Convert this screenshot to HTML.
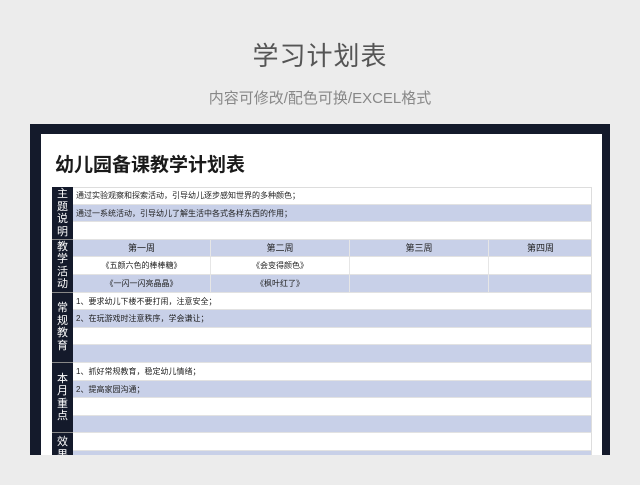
<!DOCTYPE html>
<html><head><meta charset="utf-8"><style>
*{margin:0;padding:0;box-sizing:border-box}
body{width:640px;height:485px;background:#ececec;font-family:"Liberation Sans","Noto Sans CJK SC",sans-serif;position:relative;overflow:hidden}
.t1{position:absolute;top:36px;width:640px;text-align:center;font-size:26px;color:#555;letter-spacing:1px}
.t2{position:absolute;top:87px;width:640px;text-align:center;font-size:15px;color:#888}
.panel{position:absolute;left:30px;top:124px;width:580px;height:331px;background:#141a2b}
.inner{position:absolute;left:41px;top:134px;width:561px;height:321px;background:#fff;overflow:hidden}
.h{position:absolute;left:14px;top:16px;font-size:19px;font-weight:bold;color:#1a1a1a}
.r{position:absolute;left:32px;width:519px;height:17.6px;border-bottom:1px solid #e2e2e2;border-right:1px solid #ddd;font-size:8px;color:#222;line-height:17px;padding-left:3px;white-space:nowrap}
.b{background:#c8d0e8}
.l{position:absolute;left:11px;width:21px;background:#141a2b;color:#fff;font-size:11px;text-align:center;line-height:12.5px;display:flex;flex-direction:column;justify-content:center;border-bottom:1px solid #888}
.c{position:absolute;top:0;height:100%;text-align:center;border-right:1px solid #e6e6e6}
.top{position:absolute;left:32px;top:53px;width:519px;border-top:1px solid #ddd}
</style></head><body>
<div class="t1">学习计划表</div>
<div class="t2">内容可修改/配色可换/EXCEL格式</div>
<div class="panel"></div>
<div class="inner">
<div class="h">幼儿园备课教学计划表</div>
<div class="top"></div>
<div class="l" style="top:53px;height:53px">主<br>题<br>说<br>明</div>
<div class="r" style="top:53px">通过实验观察和探索活动，引导幼儿逐步感知世界的多种颜色；</div>
<div class="r b" style="top:70.6px">通过一系统活动，引导幼儿了解生活中各式各样东西的作用；</div>
<div class="r" style="top:88.2px"></div>
<div class="l" style="top:106px;height:52.6px">教<br>学<br>活<br>动</div>
<div class="r b" style="top:105.8px;padding:0;font-size:9px"><div class="c" style="left:0;width:138px">第一周</div><div class="c" style="left:138px;width:139px">第二周</div><div class="c" style="left:277px;width:139px">第三周</div><div class="c" style="left:416px;width:103px;border:0">第四周</div></div>
<div class="r" style="top:123.4px;padding:0"><div class="c" style="left:0;width:138px">《五颜六色的棒棒糖》</div><div class="c" style="left:138px;width:139px">《会变得颜色》</div><div class="c" style="left:277px;width:139px"></div></div>
<div class="r b" style="top:141px;padding:0"><div class="c" style="left:0;width:138px">《一闪一闪亮晶晶》</div><div class="c" style="left:138px;width:139px">《枫叶红了》</div><div class="c" style="left:277px;width:139px"></div></div>
<div class="l" style="top:158.6px;height:70.4px">常<br>规<br>教<br>育</div>
<div class="r" style="top:158.6px">1、要求幼儿下楼不要打闹，注意安全；</div>
<div class="r b" style="top:176.2px">2、在玩游戏时注意秩序，学会谦让；</div>
<div class="r" style="top:193.8px"></div>
<div class="r b" style="top:211.4px"></div>
<div class="l" style="top:229px;height:70.4px">本<br>月<br>重<br>点</div>
<div class="r" style="top:229px">1、抓好常规教育，稳定幼儿情绪；</div>
<div class="r b" style="top:246.6px">2、提高家园沟通；</div>
<div class="r" style="top:264.2px"></div>
<div class="r b" style="top:281.8px"></div>
<div class="l" style="top:299.4px;height:40px;justify-content:flex-start;padding-top:3px">效<br>果</div>
<div class="r" style="top:299.4px"></div>
<div class="r b" style="top:317px"></div>
</div>
</body></html>
